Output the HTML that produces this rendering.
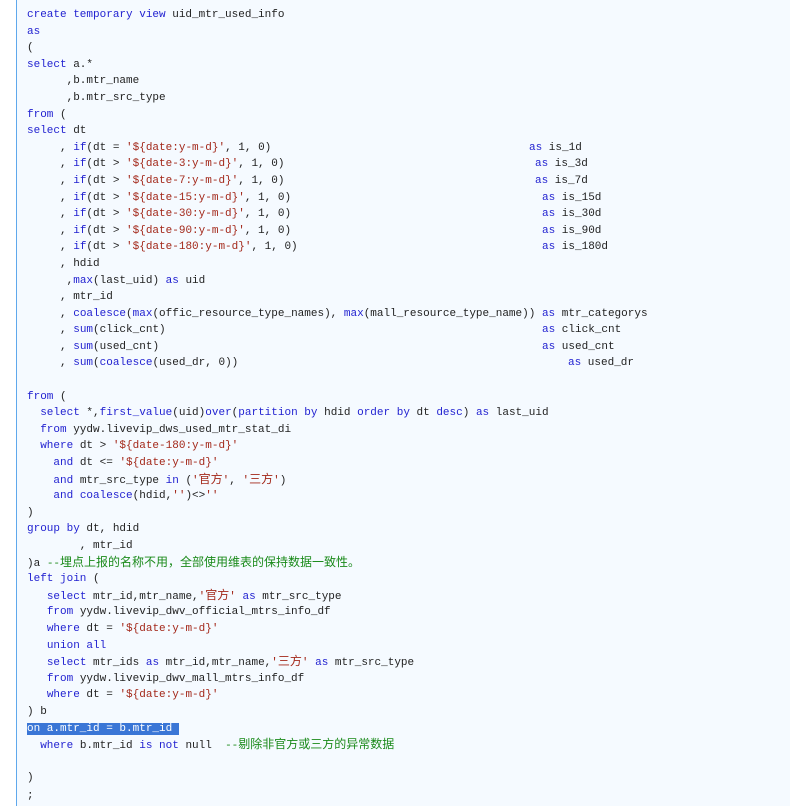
<!DOCTYPE html>
<html><head><meta charset="utf-8">
<style>
html,body{margin:0;padding:0;background:#fff;width:790px;height:806px;overflow:hidden}
.wrap{position:absolute;left:16px;top:0;width:774px;height:806px;background:#f5faff;border-left:1px solid #5fa8ec}
.code{position:absolute;left:10px;top:7px;font-family:"Liberation Mono","Noto Sans CJK SC",monospace;font-size:11px;color:#222;}
.l{height:16.6px;line-height:16.6px;white-space:pre;position:relative}
.k{color:#1f1fd0}
.s{color:#a3281a}
.c{color:#1a8a1a}
.z{font-size:12px}
.a{position:absolute;top:0}
.sel{background:#3a76d6;color:#fff}
</style></head><body>
<div class="wrap"><div class="code">
<div class="l"><span class="k">create temporary view</span> uid_mtr_used_info</div>
<div class="l"><span class="k">as</span></div>
<div class="l">(</div>
<div class="l"><span class="k">select</span> a.*</div>
<div class="l">      ,b.mtr_name</div>
<div class="l">      ,b.mtr_src_type</div>
<div class="l"><span class="k">from</span> (</div>
<div class="l"><span class="k">select</span> dt</div>
<div class="l">     , <span class="k">if</span>(dt = <span class="s">'${date:y-m-d}'</span>, 1, 0)<span class="a" style="left:502px"><span class="k">as</span> is_1d</span></div>
<div class="l">     , <span class="k">if</span>(dt &gt; <span class="s">'${date-3:y-m-d}'</span>, 1, 0)<span class="a" style="left:508px"><span class="k">as</span> is_3d</span></div>
<div class="l">     , <span class="k">if</span>(dt &gt; <span class="s">'${date-7:y-m-d}'</span>, 1, 0)<span class="a" style="left:508px"><span class="k">as</span> is_7d</span></div>
<div class="l">     , <span class="k">if</span>(dt &gt; <span class="s">'${date-15:y-m-d}'</span>, 1, 0)<span class="a" style="left:515px"><span class="k">as</span> is_15d</span></div>
<div class="l">     , <span class="k">if</span>(dt &gt; <span class="s">'${date-30:y-m-d}'</span>, 1, 0)<span class="a" style="left:515px"><span class="k">as</span> is_30d</span></div>
<div class="l">     , <span class="k">if</span>(dt &gt; <span class="s">'${date-90:y-m-d}'</span>, 1, 0)<span class="a" style="left:515px"><span class="k">as</span> is_90d</span></div>
<div class="l">     , <span class="k">if</span>(dt &gt; <span class="s">'${date-180:y-m-d}'</span>, 1, 0)<span class="a" style="left:515px"><span class="k">as</span> is_180d</span></div>
<div class="l">     , hdid</div>
<div class="l">      ,<span class="k">max</span>(last_uid) <span class="k">as</span> uid</div>
<div class="l">     , mtr_id</div>
<div class="l">     , <span class="k">coalesce</span>(<span class="k">max</span>(offic_resource_type_names), <span class="k">max</span>(mall_resource_type_name)) <span class="k">as</span> mtr_categorys</div>
<div class="l">     , <span class="k">sum</span>(click_cnt)<span class="a" style="left:515px"><span class="k">as</span> click_cnt</span></div>
<div class="l">     , <span class="k">sum</span>(used_cnt)<span class="a" style="left:515px"><span class="k">as</span> used_cnt</span></div>
<div class="l">     , <span class="k">sum</span>(<span class="k">coalesce</span>(used_dr, 0))<span class="a" style="left:541px"><span class="k">as</span> used_dr</span></div>
<div class="l"> </div>
<div class="l"><span class="k">from</span> (</div>
<div class="l">  <span class="k">select</span> *,<span class="k">first_value</span>(uid)<span class="k">over</span>(<span class="k">partition by</span> hdid <span class="k">order by</span> dt <span class="k">desc</span>) <span class="k">as</span> last_uid</div>
<div class="l">  <span class="k">from</span> yydw.livevip_dws_used_mtr_stat_di</div>
<div class="l">  <span class="k">where</span> dt &gt; <span class="s">'${date-180:y-m-d}'</span></div>
<div class="l">    <span class="k">and</span> dt &lt;= <span class="s">'${date:y-m-d}'</span></div>
<div class="l">    <span class="k">and</span> mtr_src_type <span class="k">in</span> (<span class="s">'<span class="z">官方</span>'</span>, <span class="s">'<span class="z">三方</span>'</span>)</div>
<div class="l">    <span class="k">and</span> <span class="k">coalesce</span>(hdid,<span class="s">''</span>)&lt;&gt;<span class="s">''</span></div>
<div class="l">)</div>
<div class="l"><span class="k">group by</span> dt, hdid</div>
<div class="l">        , mtr_id</div>
<div class="l">)a <span class="c">--<span class="z">埋点上报的名称不用，全部使用维表的保持数据一致性。</span></span></div>
<div class="l"><span class="k">left join</span> (</div>
<div class="l">   <span class="k">select</span> mtr_id,mtr_name,<span class="s">'<span class="z">官方</span>'</span> <span class="k">as</span> mtr_src_type</div>
<div class="l">   <span class="k">from</span> yydw.livevip_dwv_official_mtrs_info_df</div>
<div class="l">   <span class="k">where</span> dt = <span class="s">'${date:y-m-d}'</span></div>
<div class="l">   <span class="k">union all</span></div>
<div class="l">   <span class="k">select</span> mtr_ids <span class="k">as</span> mtr_id,mtr_name,<span class="s">'<span class="z">三方</span>'</span> <span class="k">as</span> mtr_src_type</div>
<div class="l">   <span class="k">from</span> yydw.livevip_dwv_mall_mtrs_info_df</div>
<div class="l">   <span class="k">where</span> dt = <span class="s">'${date:y-m-d}'</span></div>
<div class="l">) b</div>
<div class="l"><span class="sel">on a.mtr_id = b.mtr_id </span></div>
<div class="l">  <span class="k">where</span> b.mtr_id <span class="k">is not</span> null  <span class="c">--<span class="z">剔除非官方或三方的异常数据</span></span></div>
<div class="l"> </div>
<div class="l">)</div>
<div class="l" style="margin-top:1px">;</div>
</div></div>
</body></html>
